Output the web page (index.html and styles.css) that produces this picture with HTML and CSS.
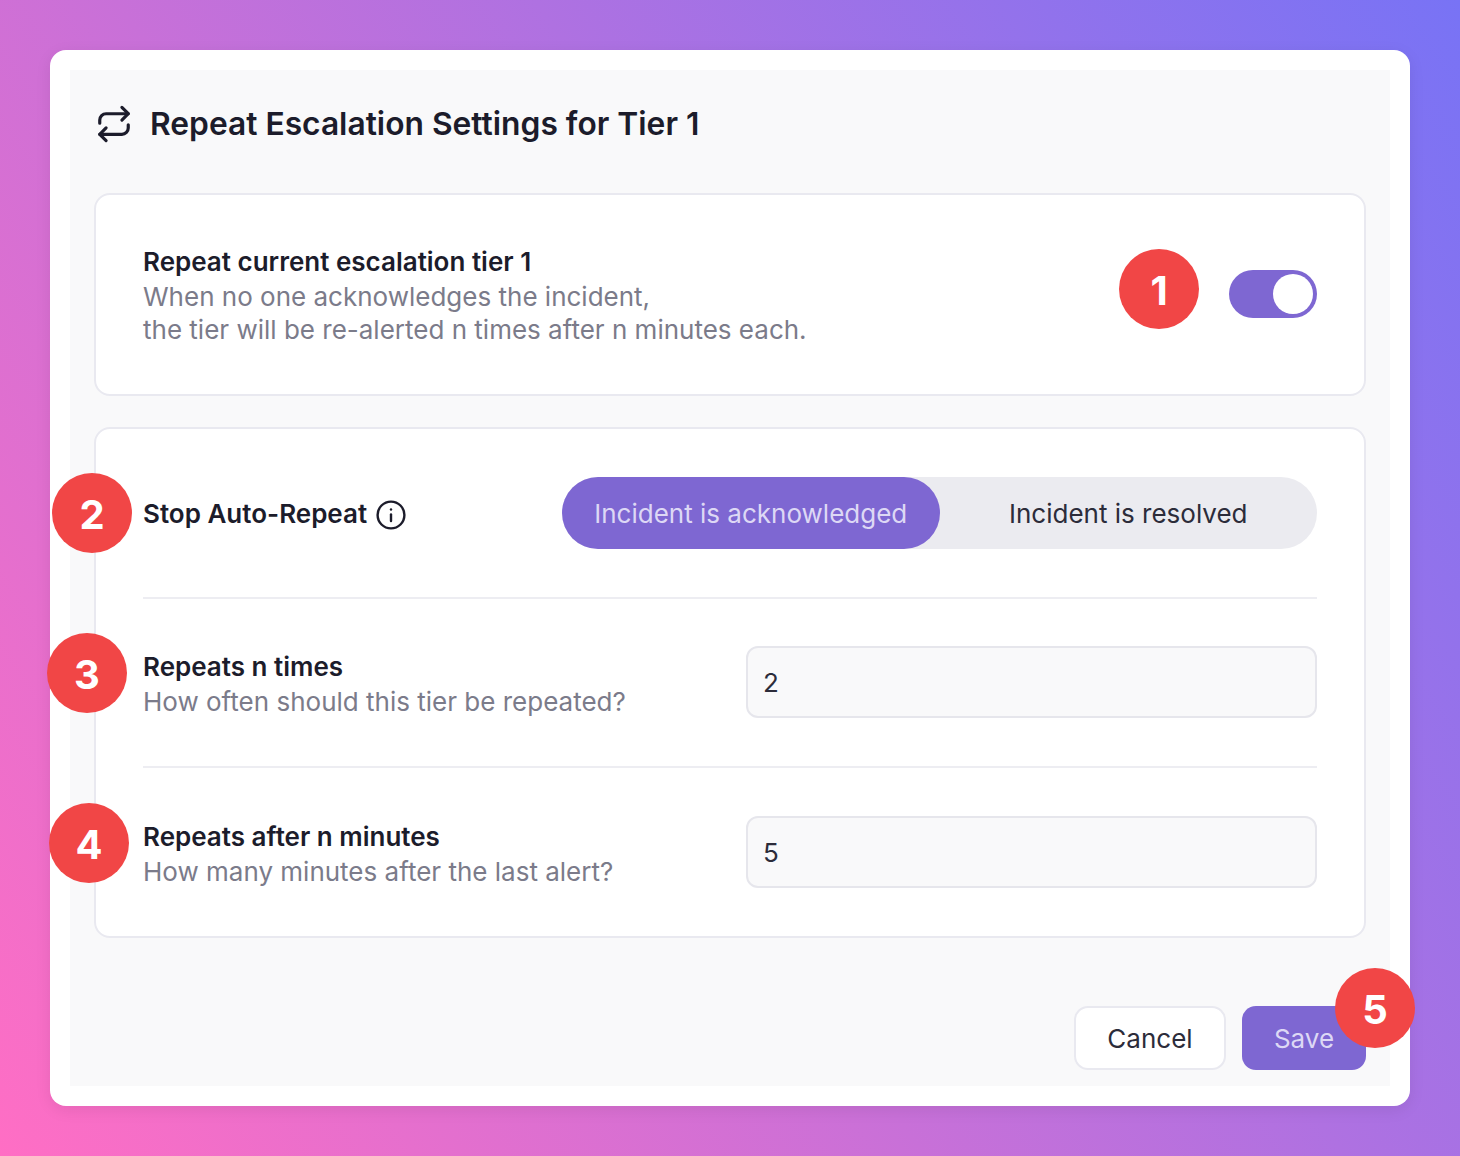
FILE: index.html
```html
<!DOCTYPE html>
<html lang="en">
<head>
  <meta charset="UTF-8">
  <meta name="viewport" content="width=device-width, initial-scale=1.0">
  <title>Repeat Escalation Settings</title>
  <link rel="stylesheet" href="styles.css">
</head>
<body>
  <div class="frame">
    <div class="panel">
      <div class="title-row">
        <svg class="title-icon" viewBox="0 0 24 24" fill="none" stroke="currentColor" stroke-width="2" stroke-linecap="round" stroke-linejoin="round">
          <path d="M17 1.5l4 4-4 4"/>
          <path d="M3 11.5v-2a4 4 0 0 1 4-4h14"/>
          <path d="M7 22.5l-4-4 4-4"/>
          <path d="M21 12.5v2a4 4 0 0 1-4 4H3"/>
        </svg>
        <h1>Repeat Escalation Settings for Tier 1</h1>
      </div>

      <div class="card card-toggle">
        <div class="text-block">
          <div class="label">Repeat current escalation tier 1</div>
          <div class="hint">When no one acknowledges the incident,<br>the tier will be re-alerted n times after n minutes each.</div>
        </div>
        <div class="toggle"><span class="knob"></span></div>
      </div>

      <div class="card card-form">
        <div class="row">
          <div class="label label-info">
            Stop Auto-Repeat
            <svg class="info-icon" viewBox="0 0 30 30" fill="none" stroke="currentColor" stroke-width="2.4" stroke-linecap="round">
              <circle cx="15" cy="15" r="13.4"/>
              <path d="M15 14.5v6.5"/>
              <path d="M15 9.4v.1"/>
            </svg>
          </div>
          <div class="segment">
            <div class="seg-btn active">Incident is acknowledged</div>
            <div class="seg-btn">Incident is resolved</div>
          </div>
        </div>
        <div class="row">
          <div class="text-block">
            <div class="label">Repeats n times</div>
            <div class="hint">How often should this tier be repeated?</div>
          </div>
          <input class="field" type="text" value="2">
        </div>
        <div class="row">
          <div class="text-block">
            <div class="label">Repeats after n minutes</div>
            <div class="hint">How many minutes after the last alert?</div>
          </div>
          <input class="field" type="text" value="5">
        </div>
      </div>

      <div class="actions">
        <button class="btn btn-cancel">Cancel</button>
        <button class="btn btn-save">Save</button>
      </div>
    </div>
  </div>

  <div class="badge badge-1">1</div>
  <div class="badge badge-2">2</div>
  <div class="badge badge-3">3</div>
  <div class="badge badge-4">4</div>
  <div class="badge badge-5">5</div>
</body>
</html>
```

FILE: styles.css
```css
html, body {
  margin: 0;
  height: 1156px;
  overflow: hidden;
}
body {
  position: relative;
  font-family: Inter, "Noto Sans", sans-serif;
  background: linear-gradient(55deg, #ff6ec4 0%, #7873f5 100%);
  color: #1c1c2b;
}
.frame {
  box-sizing: border-box;
  width: 1360px;
  height: 1056px;
  margin: 0 auto;
  position: relative;
  top: 50px;
  padding: 20px;
  background: #fff;
  border-radius: 16px;
  box-shadow: 0 4px 16px rgba(0,0,0,0.08);
}
.panel {
  height: 1016px;
  box-sizing: border-box;
  padding: 0 24px;
  background: #f9f9fa;
}
.title-row {
  display: flex;
  align-items: center;
  height: 107px;
  margin-bottom: 16px;
  gap: 17px;
}
.title-icon {
  width: 38px;
  height: 38px;
  margin-left: 1px;
  color: #1c1c2b;
}
h1 {
  margin: 0 0 1px;
  font-size: 31.75px;
  font-weight: 600;
  color: #1c1c2b;
}
.card {
  background: #fff;
  border: 2px solid #e9e9f0;
  border-radius: 16px;
}
.card-toggle {
  box-sizing: border-box;
  height: 203px;
  padding: 0 47px 1px;
  display: flex;
  align-items: center;
  justify-content: space-between;
}
.text-block {
  padding-top: 3px;
}
.label {
  font-size: 26px;
  line-height: 33px;
  font-weight: 600;
  color: #1c1c2b;
}
.text-block .label {
  margin-bottom: 2px;
}
.hint {
  font-size: 26px;
  line-height: 33px;
  color: #7b7b8a;
}
.toggle {
  box-sizing: border-box;
  width: 88px;
  height: 48px;
  padding: 4px;
  display: flex;
  justify-content: flex-end;
  background: #7e67d2;
  border-radius: 24px;
}
.knob {
  width: 40px;
  height: 40px;
  background: #fff;
  border-radius: 50%;
}
.card-form {
  margin-top: 31px;
  padding: 0 47px;
}
.row {
  display: flex;
  align-items: center;
  justify-content: space-between;
  padding: 48px 0;
  border-bottom: 2px solid #ededf2;
}
.row:nth-child(2) {
  padding-top: 47px;
}
.row:last-child {
  border-bottom: 0;
}
.label-info {
  display: flex;
  align-items: center;
  gap: 9px;
}
.info-icon {
  width: 30px;
  height: 30px;
  margin-top: 3px;
  color: #1c1c2b;
}
.segment {
  display: flex;
  width: 755px;
  height: 72px;
  background: #ebebf0;
  border-radius: 36px;
}
.seg-btn {
  flex: 1;
  display: flex;
  align-items: center;
  justify-content: center;
  font-size: 26px;
  color: #2c2c3a;
  border-radius: 36px;
}
.seg-btn.active {
  background: #7e67d2;
  color: #ddd8f5;
}
.field {
  box-sizing: border-box;
  width: 571px;
  height: 72px;
  padding: 0 15px;
  font-family: inherit;
  font-size: 26px;
  color: #2c2c3a;
  background: #f9f9fa;
  border: 2px solid #e6e6ec;
  border-radius: 12px;
}
.actions {
  display: flex;
  justify-content: flex-end;
  gap: 16px;
  margin-top: 68px;
}
.btn {
  height: 64px;
  font-family: inherit;
  font-size: 26px;
  border-radius: 14px;
}
.btn-cancel {
  width: 152px;
  background: #fff;
  color: #2c2c3a;
  border: 2px solid #e9e9f0;
}
.btn-save {
  width: 124px;
  background: #7e67d2;
  color: #ddd8f5;
  border: 0;
}
.badge {
  position: absolute;
  width: 80px;
  height: 80px;
  padding-top: 2px;
  box-sizing: border-box;
  display: flex;
  align-items: center;
  justify-content: center;
  background: #f14646;
  color: #fff;
  border-radius: 50%;
  font-size: 40px;
  font-weight: 700;
}
.badge-1 { left: 1119px; top: 249px; }
.badge-2 { left: 52px; top: 473px; }
.badge-3 { left: 47px; top: 633px; }
.badge-4 { left: 49px; top: 803px; }
.badge-5 { left: 1335px; top: 968px; }
```
